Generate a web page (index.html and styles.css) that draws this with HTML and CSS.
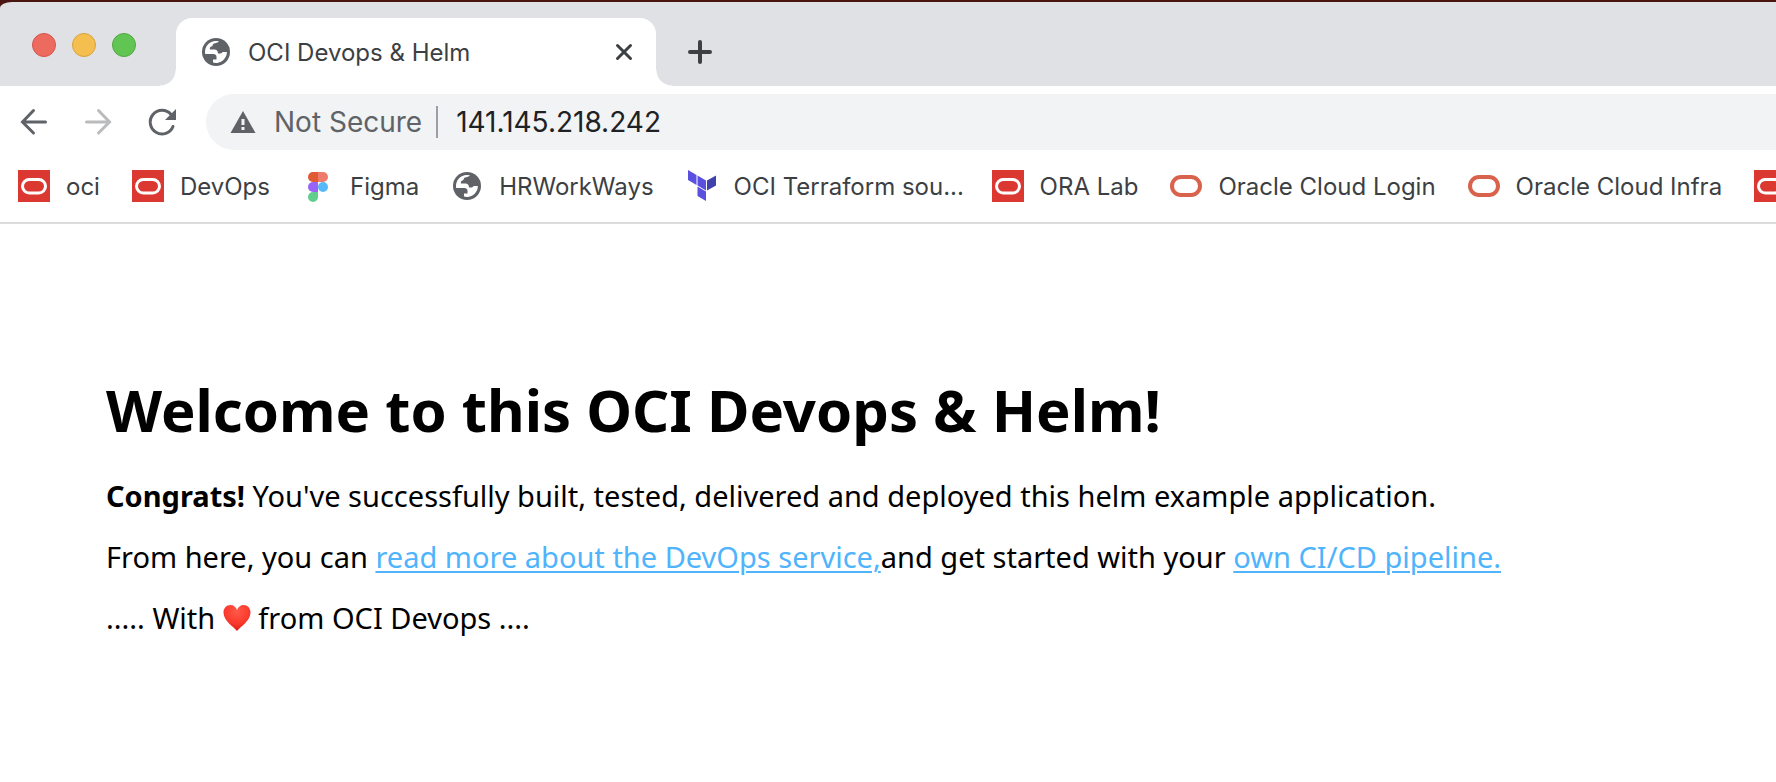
FILE: index.html
```html
<!DOCTYPE html>
<html lang="en">
<head>
<meta charset="utf-8">
<title>OCI Devops &amp; Helm</title>
<link rel="stylesheet" href="styles.css">
</head>
<body>
<svg class="symbols" aria-hidden="true">
  <symbol id="globe" viewBox="0 0 28 28">
    <circle cx="14" cy="14" r="14" fill="#5f6368"/>
    <path d="M17 3.3C16 5 13.500 5 12 5.500C10.500 6 11 8 9.500 8.500C8 9 7.500 10 8 11.500H12.500C14.500 11.500 16 13 16 15.500H18.500C20 15.500 20 14 21 14H24.900A11 11 0 0 1 11 24.600V21.500H14.500V18.500C14.500 17 13 16 11.500 16H3.200A11 11 0 0 1 17 3.300Z" fill="#fff"/>
  </symbol>
  <symbol id="oracle-tile" viewBox="0 0 32 32">
    <rect width="32" height="32" fill="#db3832"/>
    <rect x="4.500" y="9.500" width="23" height="13.500" rx="6.750" fill="none" stroke="#fff" stroke-width="3"/>
  </symbol>
  <symbol id="oracle-ring" viewBox="0 0 32 32">
    <rect x="2" y="7" width="28" height="18" rx="9" fill="none" stroke="#d9624c" stroke-width="4"/>
  </symbol>
</svg>

<header class="browser">
  <div class="tab-strip">
    <div class="lights">
      <button class="light close" aria-label="Close window"></button>
      <button class="light minimise" aria-label="Minimise window"></button>
      <button class="light expand" aria-label="Expand window"></button>
    </div>
    <div class="tab">
      <svg class="favicon"><use href="#globe"/></svg>
      <span class="tab-title">OCI Devops &amp; Helm</span>
      <button class="icon-button" aria-label="Close tab">
        <svg width="20" height="20" viewBox="0 0 20 20"><path d="M3.500 3.500l13 13M16.500 3.500l-13 13" stroke="#3c4043" stroke-width="3" stroke-linecap="round"/></svg>
      </button>
    </div>
    <button class="icon-button new-tab" aria-label="New tab">
      <svg width="24" height="24" viewBox="0 0 24 24"><path d="M12 2v20M2 12h20" stroke="#3c4043" stroke-width="4" stroke-linecap="round"/></svg>
    </button>
  </div>

  <nav class="toolbar" aria-label="Navigation">
    <button class="icon-button" aria-label="Back">
      <svg width="32" height="32" viewBox="0 0 32 32"><path d="M27.500 16H4.500M15.500 4.500L4.500 16l11 11" fill="none" stroke="#5f6368" stroke-width="3" stroke-linecap="round"/></svg>
    </button>
    <button class="icon-button" aria-label="Forward">
      <svg width="32" height="32" viewBox="0 0 32 32"><path d="M4.500 16h23M16.500 4.500L27.500 16l-11 11" fill="none" stroke="#babbbd" stroke-width="3" stroke-linecap="round"/></svg>
    </button>
    <button class="icon-button" aria-label="Reload">
      <svg width="32" height="32" viewBox="0 0 32 32"><path d="M27 20.500A11.800 11.800 0 1 1 25 8.500" fill="none" stroke="#5f6368" stroke-width="3" stroke-linecap="round"/><path d="M30 3v11H19z" fill="#5f6368"/></svg>
    </button>
    <div class="omnibox">
      <svg width="26" height="24" viewBox="0 0 26 24"><path d="M13 1l12.500 22H.5z" fill="#5f6368"/><path d="M13 9v6M13 17v3" stroke="#f1f3f4" stroke-width="3"/></svg>
      <span class="security">Not Secure</span>
      <input class="address" type="text" aria-label="Address" value="141.145.218.242">
    </div>
  </nav>

  <nav class="bookmarks" aria-label="Bookmarks">
    <a href="#"><svg class="mark"><use href="#oracle-tile"/></svg><span class="label">oci</span></a>
    <a href="#"><svg class="mark"><use href="#oracle-tile"/></svg><span class="label">DevOps</span></a>
    <a href="#"><svg class="mark" viewBox="0 0 32 32"><path d="M16 2h-5a5 5 0 0 0 0 10h5z" fill="#e05a33"/><path d="M16 2h5a5 5 0 0 1 0 10h-5z" fill="#ee7b6b"/><path d="M16 12h-5a5 5 0 0 0 0 10h5z" fill="#9a63f8"/><circle cx="21" cy="17" r="5" fill="#56b9fa"/><path d="M16 22h-5a5 5 0 1 0 5 5z" fill="#60cf8b"/></svg><span class="label">Figma</span></a>
    <a href="#"><svg class="mark" viewBox="0 0 32 32"><use href="#globe" x="2" y="2" width="28" height="28"/></svg><span class="label">HRWorkWays</span></a>
    <a href="#"><svg class="mark" viewBox="0 0 32 32"><path d="M2 0l8.500 5v10L2 10zM11.500 5.500L20 10.500v10l-8.500-5zM11.500 16.500l8.500 5V31l-8.500-5z" fill="#5a50e0"/><path d="M21 10.500l9-5v10l-9 5z" fill="#4141ad"/></svg><span class="label">OCI Terraform sou...</span></a>
    <a href="#"><svg class="mark"><use href="#oracle-tile"/></svg><span class="label">ORA Lab</span></a>
    <a href="#"><svg class="mark"><use href="#oracle-ring"/></svg><span class="label">Oracle Cloud Login</span></a>
    <a href="#"><svg class="mark"><use href="#oracle-ring"/></svg><span class="label">Oracle Cloud Infra</span></a>
    <a href="#" aria-label="Oracle"><svg class="mark"><use href="#oracle-tile"/></svg></a>
  </nav>
</header>

<main class="page">
  <h1>Welcome to this OCI Devops &amp; Helm!</h1>
  <p><strong>Congrats!</strong> You've successfully built, tested, delivered and deployed this helm example application.</p>
  <p>From here, you can <a href="#">read more about the DevOps service,</a>and get started with your <a href="#">own CI/CD pipeline.</a></p>
  <p>..... With <svg class="heart" viewBox="0 0 28 28" role="img" aria-label="love"><defs><radialGradient id="glow" cx="0.5" cy="0.25" r="0.75"><stop offset="0" stop-color="#ff5a4a"/><stop offset="0.6" stop-color="#fb3a2d"/><stop offset="1" stop-color="#d81e14"/></radialGradient></defs><path d="M14 27C11 23 .5 17 .5 8.500C.5 4 3.500 1 7.500 1C10.500 1 13 3 14 6C15 3 17.500 1 20.500 1C24.500 1 27.500 4 27.500 8.500C27.500 17 17 23 14 27Z" fill="url(#glow)"/></svg> from OCI Devops ....</p>
</main>
</body>
</html>
```
FILE: styles.css
```css
* {
  box-sizing: border-box;
}

body {
  margin: 0;
  background: #fff;
  color: #000;
  font-family: "Noto Sans", "Open Sans", sans-serif;
}

button {
  border: 0;
  padding: 0;
  background: none;
}

svg {
  display: block;
  flex: none;
}

.symbols {
  display: none;
}

.browser {
  overflow: hidden;
  border-top: 2px solid #4a1510;
  border-bottom: 2px solid #dadbdc;
  background: #4a1510;
  color: #3c4043;
  font-family: Inter, Roboto, sans-serif;
  font-size: 24px;
}

.tab-strip {
  display: flex;
  height: 84px;
  padding-top: 16px;
  border-top-left-radius: 12px 6px;
  background: #dfe1e5;
}

.lights {
  display: flex;
  gap: 16px;
  width: 176px;
  padding: 15px 0 0 32px;
}

.light {
  width: 24px;
  height: 24px;
  border: 1px solid;
  border-radius: 50%;
}

.close {
  border-color: #d5554b;
  background: #ed6a5e;
}

.minimise {
  border-color: #d9a13c;
  background: #f5bf4f;
}

.expand {
  border-color: #51a73e;
  background: #61c554;
}

.tab {
  position: relative;
  display: flex;
  align-items: center;
  gap: 18px;
  width: 480px;
  padding: 0 22px 0 26px;
  border-radius: 16px 16px 0 0;
  background: #fff;
}

.tab::before,
.tab::after {
  position: absolute;
  bottom: 0;
  width: 16px;
  height: 16px;
  content: "";
}

.tab::before {
  right: 100%;
  background: radial-gradient(circle at 0 0, #dfe1e5 15px, #fff 16px);
}

.tab::after {
  left: 100%;
  background: radial-gradient(circle at 100% 0, #dfe1e5 15px, #fff 16px);
}

.favicon {
  width: 28px;
  height: 28px;
}

.tab-title {
  flex: 1;
}

.new-tab {
  padding-left: 32px;
}

.toolbar {
  display: flex;
  align-items: center;
  gap: 32px;
  padding: 8px 0 8px 18px;
  background: #fff;
}

.omnibox {
  display: flex;
  flex: 1;
  align-items: center;
  height: 56px;
  margin-left: -4px;
  padding-left: 24px;
  border-radius: 28px 0 0 28px;
  background: #f1f3f4;
  font-size: 28px;
}

.security {
  margin: 0 14px 0 18px;
  color: #5f6368;
}

.address {
  flex: 1;
  height: 32px;
  padding: 0 0 0 18px;
  border: 0;
  border-left: 2px solid #9aa0a6;
  outline: 0;
  background: none;
  color: #202124;
  font: inherit;
}

.bookmarks {
  display: flex;
  gap: 32px;
  height: 64px;
  padding: 0 0 8px 18px;
  background: #fff;
  white-space: nowrap;
}

.bookmarks a {
  display: flex;
  flex: none;
  align-items: center;
  gap: 16px;
  color: inherit;
  text-decoration: none;
}

.label {
  max-width: 226px;
}

.mark {
  width: 32px;
  height: 32px;
}

.page {
  padding: 146px 106px 64px;
  font-size: 29px;
  line-height: 40px;
}

.page h1 {
  margin: 0 0 26px;
  font-size: 58px;
  line-height: 80px;
}

.page p {
  margin: 0 0 21px;
}

.page a {
  color: #4fb4fb;
  text-decoration-thickness: 2px;
  text-underline-offset: 3px;
}

.heart {
  display: inline-block;
  width: 28px;
  height: 28px;
  vertical-align: -3px;
}
```
